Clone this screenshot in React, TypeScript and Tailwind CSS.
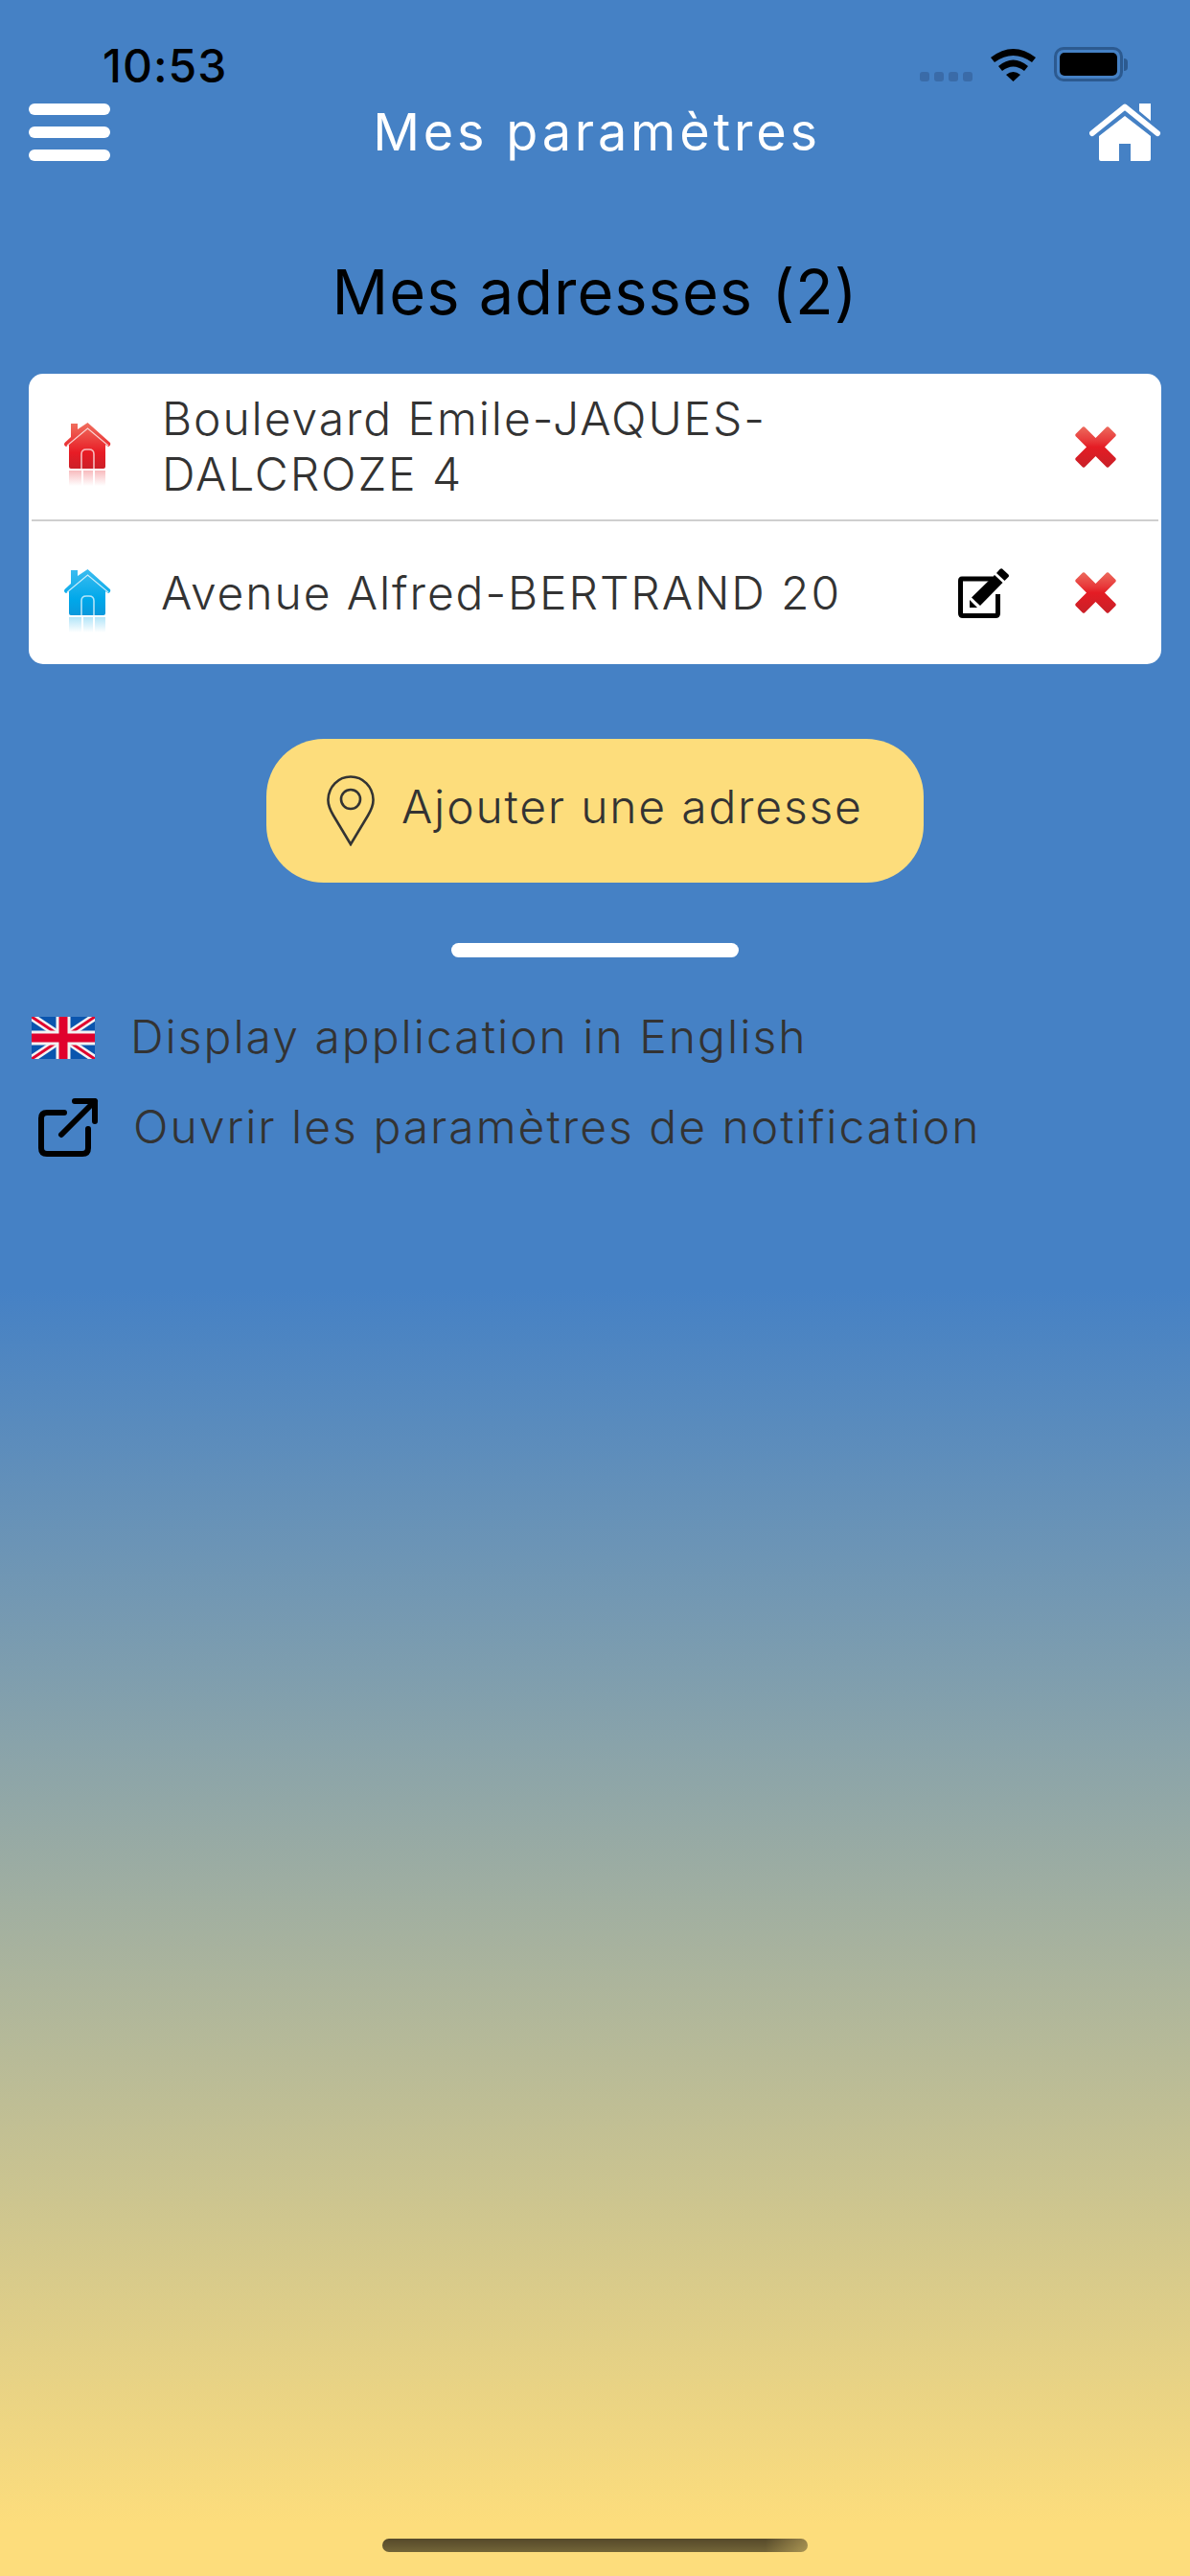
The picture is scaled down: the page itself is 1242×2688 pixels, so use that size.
import React from "react";

const font = "font-['Inter','Liberation_Sans',sans-serif]";

const StatusBar = () => (
  <div className="h-[108px] flex items-start">
    <span className="ml-[107px] mt-[44px] text-[48px] leading-[50px] font-medium tracking-[1px] text-black">10:53</span>
    <div className="ml-auto mr-[65px] mt-[49px] flex items-start">
      <div className="mt-[26px] flex gap-[5px]">
        <i className="w-[10px] h-[10px] rounded-[3px] bg-[#3a6ba8]" />
        <i className="w-[10px] h-[10px] rounded-[3px] bg-[#3a6ba8]" />
        <i className="w-[10px] h-[10px] rounded-[3px] bg-[#3a6ba8]" />
        <i className="w-[10px] h-[10px] rounded-[3px] bg-[#3a6ba8]" />
      </div>
      <svg className="ml-[19px]" width="47" height="36" viewBox="0 0 47 36">
        <path d="M0 11 Q23.5 -7 47 11 L43 16 Q23.5 2 4 16 Z" fill="#000" />
        <path d="M8 20 Q23.5 7 39 20 L35 25 Q23.5 16 12 25 Z" fill="#000" />
        <path d="M16 29 Q23.5 23 31 29 L23.5 36 Z" fill="#000" />
      </svg>
      <div className="ml-[19px] w-[72px] h-[36px] rounded-[10px] border-[3px] border-[#2c5a90] p-[3px]">
        <div className="w-full h-full rounded-[5px] bg-black" />
      </div>
      <div className="ml-[1px] mt-[12px] w-[4px] h-[13px] rounded-r-[4px] bg-[#2c5a90]" />
    </div>
  </div>
);

const WhiteHome = () => (
  <svg width="75" height="60" viewBox="0 0 75 60">
    <path d="M52 0 H64 V18 L52 8 Z" fill="#fff" />
    <path d="M3 31 L37 3.5 L71 31" fill="none" stroke="#fff" strokeWidth="6" strokeLinecap="round" strokeLinejoin="round" />
    <path d="M10 34 L37 13 L64 34 V58 Q64 60 62 60 H43 V42 H31 V60 H12 Q10 60 10 58 Z" fill="#fff" />
  </svg>
);

const Header = () => (
  <div className="h-[60px] px-[30px] flex items-center justify-between relative">
    <div className="flex flex-col gap-[12px] w-[85px]">
      <div className="h-[12px] rounded-full bg-white" />
      <div className="h-[12px] rounded-full bg-white" />
      <div className="h-[12px] rounded-full bg-white" />
    </div>
    <h1 className="text-[54px] leading-[60px] font-normal text-white tracking-[3.8px] -translate-x-[3px]">Mes paramètres</h1>
    <WhiteHome />
  </div>
);

const GlossyHome = ({ id, top, mid, low }: { id: string; top: string; mid: string; low: string }) => (
  <svg width="50" height="66" viewBox="0 0 50 66" className="shrink-0">
    <defs>
      <linearGradient id={id} x1="0" y1="0" x2="0" y2="1">
        <stop offset="0" stopColor={top} />
        <stop offset="0.65" stopColor={mid} />
        <stop offset="1" stopColor={low} />
      </linearGradient>
      <linearGradient id={`${id}-r`} x1="0" y1="0" x2="0" y2="1">
        <stop offset="0" stopColor={mid} stopOpacity="0.3" />
        <stop offset="1" stopColor={mid} stopOpacity="0" />
      </linearGradient>
    </defs>
    <path d="M7 1 H14 V7 L24.5 0 L48 21 Q49 24 46 25 L43 23 V46 Q43 48 41 48 H7 Q5 48 5 46 V23 L2 25 Q-1 24 0.5 21 L7 15 Z" fill={`url(#${id})`} />
    <path d="M3 24 L24.5 6 L46 24" fill="none" stroke="#fff" strokeOpacity="0.75" strokeWidth="1.2" />
    <path d="M18 48 V33 Q18 28 23 28 H26 Q31 28 31 33 V48" fill="none" stroke="#fff" strokeOpacity="0.7" strokeWidth="1.6" />
    <path d="M5 50 H18 V66 H5 Z M20 50 H30 V66 H20 Z M32 50 H43 V66 H32 Z" fill={`url(#${id}-r)`} />
  </svg>
);

const Cross = ({ id }: { id: string }) => (
  <svg width="43" height="43" viewBox="0 0 43 43" className="shrink-0">
    <defs>
      <linearGradient id={id} x1="0" y1="0" x2="0" y2="1">
        <stop offset="0" stopColor="#ec6a5c" />
        <stop offset="0.35" stopColor="#e8383a" />
        <stop offset="0.5" stopColor="#e41c24" />
        <stop offset="1" stopColor="#c92028" />
      </linearGradient>
    </defs>
    <path d="M10 0.5 L21.5 12 L33 0.5 Q34 0 35 0.5 L42.5 8 Q43 9 42.5 10 L31 21.5 L42.5 33 Q43 34 42.5 35 L35 42.5 Q34 43 33 42.5 L21.5 31 L10 42.5 Q9 43 8 42.5 L0.5 35 Q0 34 0.5 33 L12 21.5 L0.5 10 Q0 9 0.5 8 L8 0.5 Q9 0 10 0.5 Z" fill={`url(#${id})`} />
  </svg>
);

const EditIcon = () => (
  <svg width="53" height="52" viewBox="0 0 53 52" className="shrink-0">
    <path d="M36 11 H4 Q2.5 11 2.5 13 V47 Q2.5 49.5 5 49.5 H39 Q41.5 49.5 41.5 47 V27" fill="none" stroke="#000" strokeWidth="5" />
    <path d="M46 0.5 L52.5 6.5 Q53.5 8 52.5 9 L48.5 13 L40 5 L43.5 1 Q45 -0.2 46 0.5 Z M38 7 L46.5 15 L23 39 L14 30.5 Z M12 33 L20 41 L12 41 Z" fill="#000" />
  </svg>
);

const PinIcon = () => (
  <svg width="50" height="74" viewBox="0 0 50 74" className="shrink-0">
    <path d="M25 72 L7 42 Q1 32 1.5 25 C2 12 12 1.5 25 1.5 C38 1.5 48 12 48.5 25 Q49 32 43 42 Z" fill="none" stroke="#333" strokeWidth="2.6" strokeLinejoin="miter" />
    <circle cx="25" cy="25" r="10" fill="none" stroke="#333" strokeWidth="2.6" />
  </svg>
);

const UkFlag = () => (
  <svg width="66" height="44" viewBox="0 0 66 44" className="shrink-0">
    <rect width="66" height="44" fill="#0a55ae" />
    <path d="M0 0 L66 44 M66 0 L0 44" stroke="#f2f2f2" strokeWidth="8" />
    <path d="M0 0 L66 44 M66 0 L0 44" stroke="#e0012d" strokeWidth="3" />
    <path d="M33 0 V44 M0 22 H66" stroke="#f2f2f2" strokeWidth="15" />
    <path d="M33 0 V44 M0 22 H66" stroke="#e0012d" strokeWidth="9" />
  </svg>
);

const LinkIcon = () => (
  <svg width="65" height="62" viewBox="0 0 65 62" className="shrink-0 blur-[0.6px]">
    <path d="M29 15 H11 Q5 15 5 21 V52 Q5 58 11 58 H48 Q54 58 54 52 V32" fill="none" stroke="#000" strokeWidth="6" strokeLinecap="round" />
    <path d="M26 38 L61 3 M40 3 H61 V24" fill="none" stroke="#000" strokeWidth="6" strokeLinecap="round" strokeLinejoin="round" />
  </svg>
);

export default function App() {
  return (
    <div className={`${font} w-[1242px] h-[2688px] flex flex-col bg-[linear-gradient(to_bottom,#4581c5_0%,#4581c5_50%,#fddd7c_98%)] overflow-hidden`}>
      <StatusBar />
      <Header />

      <h2 className="mt-[100px] text-center text-[65px] leading-[74px] font-normal tracking-[1px] text-black">Mes adresses (2)</h2>

      <div className="mt-[48px] mx-[30px] rounded-[15px] bg-white px-[3px] flex flex-col">
        <div className="h-[154px] flex items-center border-b-2 border-[#cfcfcf] pl-[34px] pr-[44px]">
          <div className="mt-[16px]"><GlossyHome id="h1" top="#f0705f" mid="#e81c25" low="#cc1f28" /></div>
          <p className="ml-[52px] w-[760px] text-[48px] leading-[58px] font-light tracking-[1.9px] text-[#333]">Boulevard Emile-JAQUES-DALCROZE 4</p>
          <div className="ml-auto"><Cross id="c1" /></div>
        </div>
        <div className="h-[149px] flex items-center pl-[34px] pr-[44px]">
          <div className="mt-[16px]"><GlossyHome id="h2" top="#3cbcf0" mid="#00a8ea" low="#0a98dc" /></div>
          <p className="ml-[51px] text-[48px] leading-[57px] font-light tracking-[1.9px] text-[#333]">Avenue Alfred-BERTRAND 20</p>
          <div className="ml-auto mr-[69px]"><EditIcon /></div>
          <Cross id="c2" />
        </div>
      </div>

      <button className="mt-[78px] self-center w-[686px] h-[150px] rounded-[60px] bg-[#fddd7c] flex items-center pl-[63px]">
        <PinIcon />
        <span className="ml-[28px] -mt-[8px] text-[48px] font-light tracking-[1.8px] text-[#333]">Ajouter une adresse</span>
      </button>

      <div className="mt-[63px] self-center w-[300px] h-[15px] rounded-full bg-white" />

      <div className="mt-[62px] ml-[33px] h-[44px] flex items-center">
        <UkFlag />
        <span className="ml-[37px] -mt-[2px] text-[48px] font-light tracking-[2px] text-[#333]">Display application in English</span>
      </div>
      <div className="mt-[41px] ml-[38px] h-[62px] flex items-center">
        <LinkIcon />
        <span className="ml-[36px] -mt-[2px] text-[48px] font-light tracking-[2px] text-[#333]">Ouvrir les paramètres de notification</span>
      </div>

      <div className="mt-auto mb-[25px] self-center w-[444px] h-[14px] rounded-full bg-[linear-gradient(to_right,transparent_90%,rgba(253,221,124,0.4)_100%),linear-gradient(to_bottom,#55492a,#736538)]" />
    </div>
  );
}
